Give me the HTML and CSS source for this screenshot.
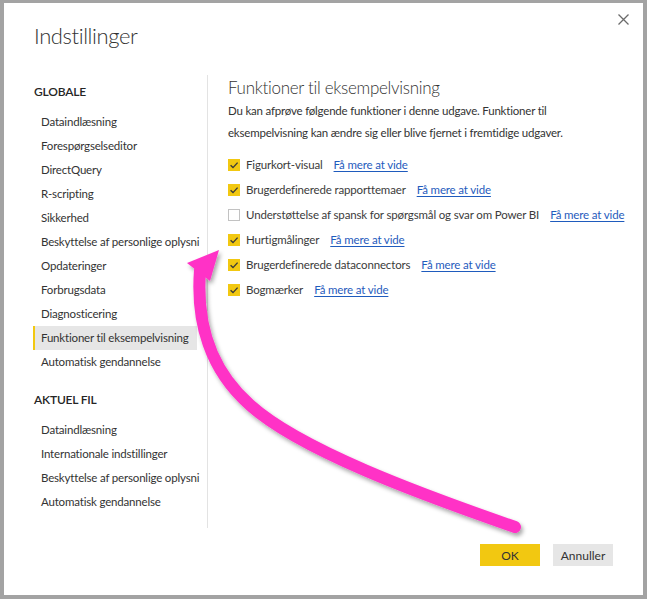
FILE: index.html
```html
<!DOCTYPE html>
<html lang="da">
<head>
<meta charset="utf-8">
<title>Indstillinger</title>
<link rel="stylesheet" href="styles.css">
</head>
<body>
<div class="dialog">
  <button class="close" aria-label="Luk">
    <svg width="11" height="11" viewBox="0 0 11 11"><path d="M0.5 0.5 L10.5 10.5 M10.5 0.5 L0.5 10.5" stroke="#6b6b6b" stroke-width="1.3" fill="none"/></svg>
  </button>
  <h1 class="title">Indstillinger</h1>
  <div class="main">
    <nav class="sidebar">
      <div class="group-title">GLOBALE</div>
      <ul class="nav">
        <li class="nav-item">Dataindlæsning</li>
        <li class="nav-item">Forespørgselseditor</li>
        <li class="nav-item">DirectQuery</li>
        <li class="nav-item">R-scripting</li>
        <li class="nav-item">Sikkerhed</li>
        <li class="nav-item">Beskyttelse af personlige oplysni</li>
        <li class="nav-item">Opdateringer</li>
        <li class="nav-item">Forbrugsdata</li>
        <li class="nav-item">Diagnosticering</li>
        <li class="nav-item active">Funktioner til eksempelvisning</li>
        <li class="nav-item">Automatisk gendannelse</li>
      </ul>
      <div class="group-title second">AKTUEL FIL</div>
      <ul class="nav">
        <li class="nav-item">Dataindlæsning</li>
        <li class="nav-item">Internationale indstillinger</li>
        <li class="nav-item">Beskyttelse af personlige oplysni</li>
        <li class="nav-item">Automatisk gendannelse</li>
      </ul>
    </nav>
    <section class="content">
      <h2 class="heading">Funktioner til eksempelvisning</h2>
      <p class="desc">Du kan afprøve følgende funktioner i denne udgave. Funktioner til eksempelvisning kan ændre sig eller blive fjernet i fremtidige udgaver.</p>
      <ul class="features">
        <li class="feature"><span class="box checked"><svg width="12" height="12" viewBox="0 0 12 12"><path d="M2.6 6.2 L5 8.6 L9.6 3.6" stroke="#3a3a3a" stroke-width="1.4" fill="none"/></svg></span><span class="label">Figurkort-visual</span><a class="more" href="#">Få mere at vide</a></li>
        <li class="feature"><span class="box checked"><svg width="12" height="12" viewBox="0 0 12 12"><path d="M2.6 6.2 L5 8.6 L9.6 3.6" stroke="#3a3a3a" stroke-width="1.4" fill="none"/></svg></span><span class="label">Brugerdefinerede rapporttemaer</span><a class="more" href="#">Få mere at vide</a></li>
        <li class="feature"><span class="box"></span><span class="label">Understøttelse af spansk for spørgsmål og svar om Power BI</span><a class="more" href="#">Få mere at vide</a></li>
        <li class="feature"><span class="box checked"><svg width="12" height="12" viewBox="0 0 12 12"><path d="M2.6 6.2 L5 8.6 L9.6 3.6" stroke="#3a3a3a" stroke-width="1.4" fill="none"/></svg></span><span class="label">Hurtigmålinger</span><a class="more" href="#">Få mere at vide</a></li>
        <li class="feature"><span class="box checked"><svg width="12" height="12" viewBox="0 0 12 12"><path d="M2.6 6.2 L5 8.6 L9.6 3.6" stroke="#3a3a3a" stroke-width="1.4" fill="none"/></svg></span><span class="label">Brugerdefinerede dataconnectors</span><a class="more" href="#">Få mere at vide</a></li>
        <li class="feature"><span class="box checked"><svg width="12" height="12" viewBox="0 0 12 12"><path d="M2.6 6.2 L5 8.6 L9.6 3.6" stroke="#3a3a3a" stroke-width="1.4" fill="none"/></svg></span><span class="label">Bogmærker</span><a class="more" href="#">Få mere at vide</a></li>
      </ul>
    </section>
  </div>
  <div class="footer">
    <button class="btn primary">OK</button>
    <button class="btn">Annuller</button>
  </div>
</div>
<svg class="arrow" width="647" height="599" viewBox="0 0 647 599">
  <defs>
    <filter id="sh" x="-20%" y="-20%" width="140%" height="140%">
      <feDropShadow dx="2" dy="3" stdDeviation="2" flood-color="#000" flood-opacity="0.35"/>
    </filter>
  </defs>
  <g filter="url(#sh)">
    <path d="M515 527 C420 494, 300 450, 250 405 C210 370, 196 322, 200 270" stroke="#ff33c6" stroke-width="12" stroke-linecap="round" fill="none"/>
    <polygon points="219,250 187,263 210,281" fill="#ff33c6"/>
  </g>
</svg>
</body>
</html>
```
FILE: styles.css
```css
* { box-sizing: border-box; }

body {
  margin: 0;
  background: #a3a3a3;
  font-family: Lato, "Open Sans", sans-serif;
  color: #333;
  position: relative;
  width: 647px;
  height: 599px;
  overflow: hidden;
}

.dialog {
  position: relative;
  width: 639px;
  height: 592px;
  margin: 3px 0 0 4px;
  background: #fff;
  display: flex;
  flex-direction: column;
}

.close {
  position: absolute;
  top: 8px;
  right: 11px;
  width: 17px;
  height: 17px;
  padding: 3px;
  border: 0;
  background: transparent;
  display: flex;
}

.title {
  margin: 0;
  height: 72px;
  padding: 18px 0 0 30px;
  font-size: 22px;
  line-height: 30px;
  font-weight: 300;
  letter-spacing: -0.4px;
  color: #333;
}

.main {
  display: flex;
  height: 453px;
}

.sidebar {
  width: 204px;
  padding: 5px 6px 0 29px;
  border-right: 1px solid #e3e3e3;
}

.group-title {
  height: 24px;
  line-height: 24px;
  padding-left: 1px;
  font-size: 12px;
  font-weight: 600;
  letter-spacing: -0.2px;
  color: #252525;
}

.group-title.second {
  margin-top: 14px;
}

.nav {
  list-style: none;
  margin: 6px 0 0;
  padding: 0;
}

.nav-item {
  height: 24px;
  line-height: 24px;
  padding-left: 8px;
  font-size: 11.5px;
  letter-spacing: -0.18px;
  color: #333;
  white-space: nowrap;
}

.nav-item.active {
  width: 164px;
  background: #e6e6e6;
  border-left: 2px solid #f2c811;
  padding-left: 6px;
}

.content {
  flex: 1;
  padding: 1px 0 0 20px;
}

.heading {
  margin: 0;
  font-size: 17px;
  line-height: 24px;
  font-weight: 300;
  letter-spacing: -0.3px;
  color: #333;
}

.desc {
  margin: 0;
  max-width: 370px;
  font-size: 11.5px;
  letter-spacing: -0.2px;
  line-height: 22px;
  color: #333;
}

.features {
  list-style: none;
  margin: 8px 0 0;
  padding: 0;
}

.feature {
  height: 25px;
  display: flex;
  align-items: center;
  font-size: 11.5px;
  letter-spacing: -0.15px;
  white-space: nowrap;
}

.box {
  width: 12px;
  height: 12px;
  border: 1px solid #c2c2c2;
  background: #fff;
  margin-right: 6px;
  display: flex;
  flex-shrink: 0;
}

.box.checked {
  border: 0;
  background: #f2c811;
}

.label {
  color: #3b3b3b;
  margin-right: 11px;
}

.more {
  color: #1f5bbd;
  text-decoration: underline;
  text-underline-offset: 2px;
}

.footer {
  display: flex;
  justify-content: flex-end;
  gap: 13px;
  padding: 16px 30px 0 0;
}

.btn {
  width: 60px;
  height: 22px;
  border: 0;
  background: #e6e6e6;
  font-family: Lato, "Open Sans", sans-serif;
  font-size: 12px;
  color: #333;
  padding: 0;
}

.btn.primary {
  background: #f2c811;
}

.arrow {
  position: absolute;
  left: 0;
  top: 0;
  pointer-events: none;
}
```
